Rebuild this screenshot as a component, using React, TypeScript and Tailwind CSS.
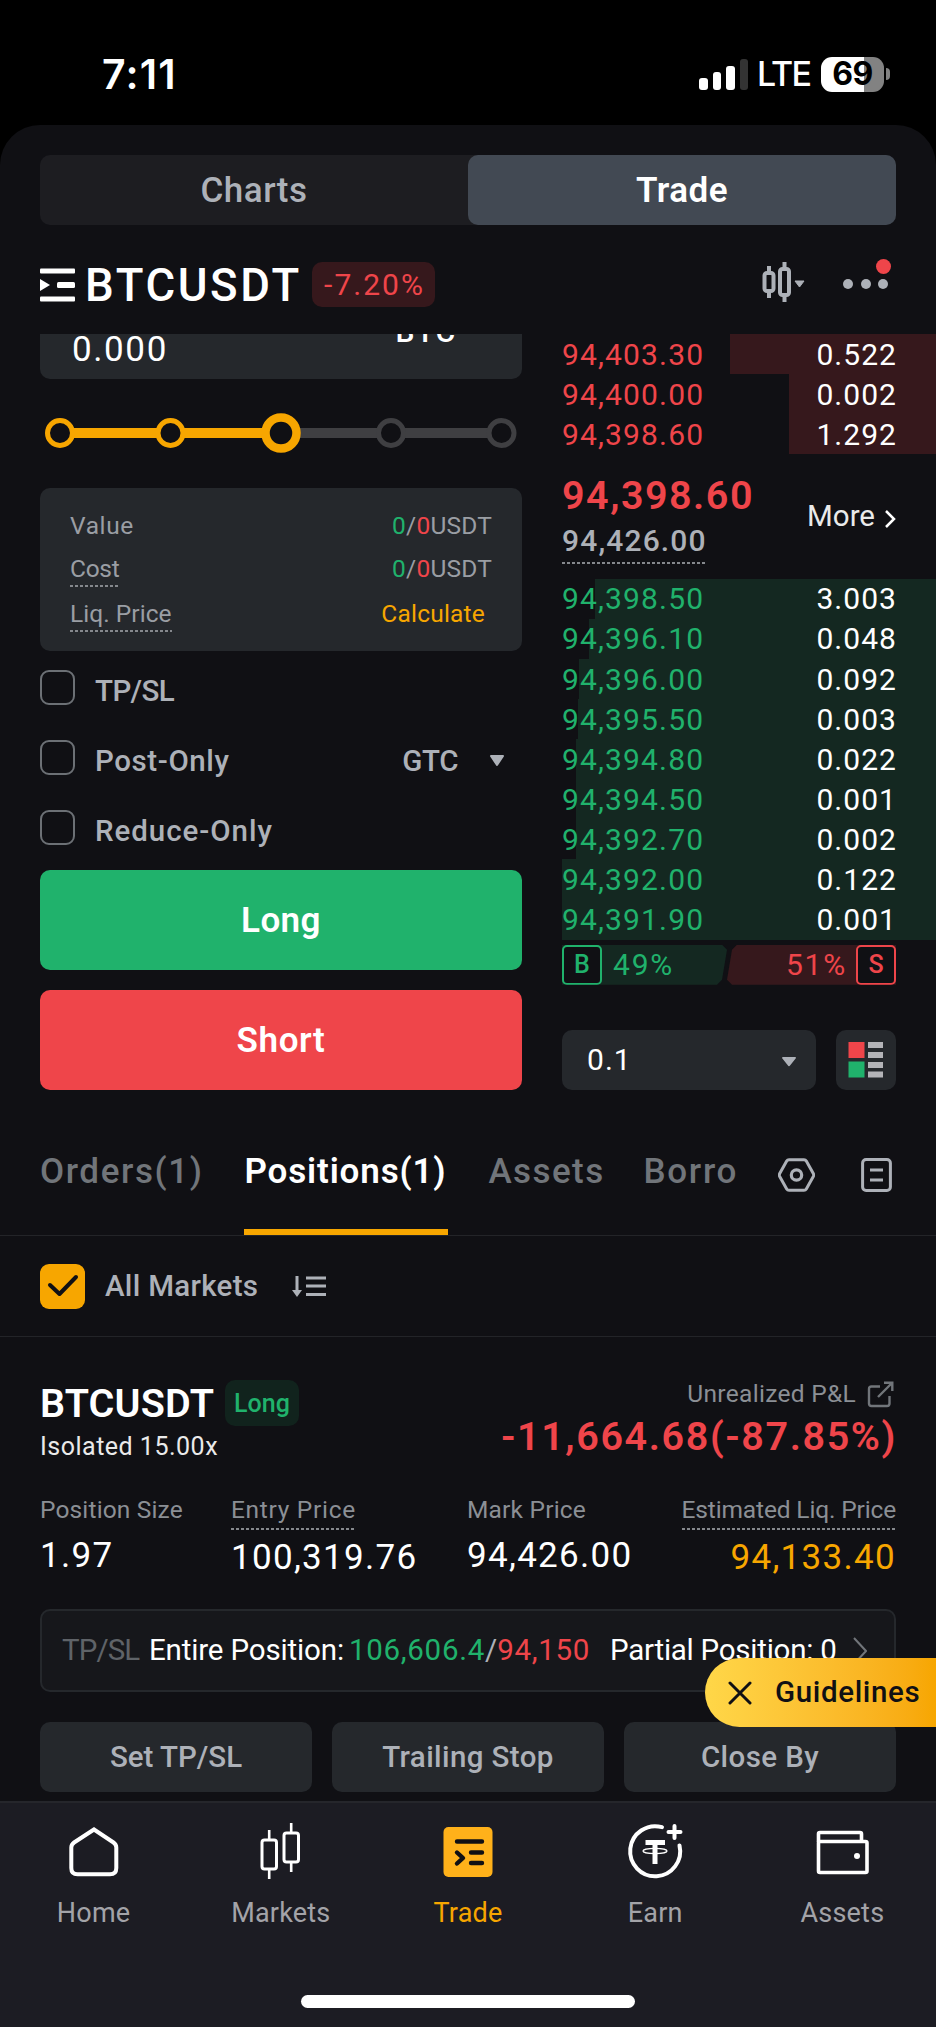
import type { ReactNode } from "react";
import clsx from "clsx";

interface BookRow {
  price: string;
  qty: string;
  depth: number;
}

const ASKS: BookRow[] = [
  { price: "94,403.30", qty: "0.522", depth: 206 },
  { price: "94,400.00", qty: "0.002", depth: 147 },
  { price: "94,398.60", qty: "1.292", depth: 147 },
];

const BIDS: BookRow[] = [
  { price: "94,398.50", qty: "3.003", depth: 341 },
  { price: "94,396.10", qty: "0.048", depth: 347 },
  { price: "94,396.00", qty: "0.092", depth: 357 },
  { price: "94,395.50", qty: "0.003", depth: 358 },
  { price: "94,394.80", qty: "0.022", depth: 360 },
  { price: "94,394.50", qty: "0.001", depth: 360 },
  { price: "94,392.70", qty: "0.002", depth: 360 },
  { price: "94,392.00", qty: "0.122", depth: 374 },
  { price: "94,391.90", qty: "0.001", depth: 374 },
];

function Dashes({ className }: { className?: string }) {
  return (
    <div
      className={clsx(
        "h-[2px] bg-[repeating-linear-gradient(90deg,#85888d_0_3px,transparent_3px_5px)]",
        className
      )}
    />
  );
}

function Caret({ className }: { className?: string }) {
  return (
    <svg viewBox="0 0 16 12" className={className} preserveAspectRatio="none" aria-hidden="true">
      <path d="M2 1h12l-6 9z" fill="#adb1b8" stroke="#adb1b8" strokeWidth="2" strokeLinejoin="round" />
    </svg>
  );
}

function StatusBar() {
  return (
    <div className="flex h-[125px] items-center justify-between bg-black pr-[46px] pl-[102px] pt-[23px]">
      <div className="font-['Inter'] text-[41px] leading-none font-semibold tracking-[1.2px] text-white">7:11</div>
      <div className="flex items-center">
        <div className="flex h-[31px] items-end gap-[5px]">
          <span className="h-[12px] w-[8.5px] rounded-[3px] bg-white" />
          <span className="h-[18px] w-[8.5px] rounded-[3px] bg-white" />
          <span className="h-[24px] w-[8.5px] rounded-[3px] bg-white" />
          <span className="h-[31px] w-[8.5px] rounded-[3px] bg-[#333]" />
        </div>
        <span className="ml-[9px] w-[54px] font-['Inter'] text-[34px] leading-none font-medium tracking-[-1.9px] text-white">
          LTE
        </span>
        <div className="ml-[10px] flex h-[35px] w-[63px] items-center justify-center rounded-[11px] bg-[linear-gradient(90deg,#fff_69%,#828282_69%)] font-['Inter'] text-[32px] leading-none font-bold tracking-[-0.5px] text-black">
          69
        </div>
        <span className="ml-[2px] h-[12px] w-[4px] rounded-r-full bg-[#828282]" />
      </div>
    </div>
  );
}

function PairHeader() {
  return (
    <div className="flex h-[109px] items-center pt-[10px] pr-[36px] pl-[40px]">
      <svg width="35" height="34" viewBox="0 0 35 34" fill="#fff" aria-hidden="true">
        <rect x="0" y="0.5" width="35" height="5" rx="1" />
        <rect x="17" y="14" width="18" height="6" rx="1.5" />
        <rect x="0" y="28.5" width="35" height="5" rx="1" />
        <path d="M0 11l10 6-10 6z" />
      </svg>
      <div className="mt-[2px] ml-[10px] w-[216px] text-[45.500px] leading-none font-medium tracking-[2.600px] text-white">
        BTCUSDT
      </div>
      <div className="ml-[11px] flex h-[45px] w-[123px] items-center justify-center rounded-[10px] bg-[#36181c] pl-[2px] text-[30px] leading-none tracking-[2px] text-[#ef454a]">
        -7.20%
      </div>
      <svg width="43" height="42" viewBox="0 0 43 42" className="mt-[-6px] ml-auto" aria-hidden="true">
        <g fill="none" stroke="#adb1b8" strokeWidth="4">
          <rect x="2.5" y="12" width="9" height="18" rx="2.5" />
          <rect x="18" y="8" width="9" height="26" rx="2.5" />
          <path d="M7 5v7M7 30v7M22.5 1v7M22.5 34v7" />
        </g>
        <path d="M33 20h9l-4.500 6z" fill="#adb1b8" stroke="#adb1b8" strokeLinejoin="round" />
      </svg>
      <div className="relative mt-[-1px] ml-[38px] flex w-[57px] items-center gap-[7.500px]">
        <span className="size-[10px] rounded-full bg-[#adb1b8]" />
        <span className="size-[10px] rounded-full bg-[#adb1b8]" />
        <span className="size-[10px] rounded-full bg-[#adb1b8]" />
        <span className="absolute top-[-20px] left-[32.500px] size-[15px] rounded-full bg-[#ef454a]" />
      </div>
    </div>
  );
}

function AmountSlider() {
  return (
    <svg width="482" height="40" viewBox="0 0 482 40" className="my-[34.500px] block" aria-hidden="true">
      <path d="M20 20H240" stroke="#f7a600" strokeWidth="10" />
      <path d="M240 20H461" stroke="#3f3f42" strokeWidth="10" />
      <g fill="#101014" strokeWidth="5">
        <circle cx="20" cy="20" r="12.500" stroke="#f7a600" />
        <circle cx="130.500" cy="20" r="12.500" stroke="#f7a600" />
        <circle cx="351" cy="20" r="12.500" stroke="#3f3f42" />
        <circle cx="461.500" cy="20" r="12.500" stroke="#3f3f42" />
      </g>
      <circle cx="241" cy="20" r="15.500" fill="#101014" stroke="#f7a600" strokeWidth="8.500" />
    </svg>
  );
}

function ZeroPair() {
  return (
    <span>
      <span className="text-[#20b26c]">0</span>/<span className="text-[#ef454a]">0</span>USDT
    </span>
  );
}

function CheckRow({ label, labelClass, children }: { label: string; labelClass: string; children?: ReactNode }) {
  return (
    <div className="flex h-[70px] items-center">
      <span className="size-[35px] rounded-[9px] border-2 border-[#6c7075]" />
      <span className={clsx("mt-[8px] ml-[20px] text-[29.500px] leading-none font-medium text-[#adb1b8]", labelClass)}>
        {label}
      </span>
      {children}
    </div>
  );
}

function OrderForm() {
  return (
    <div className="w-[482px]">
      <div className="flex h-[44.500px] items-start overflow-hidden rounded-b-[10px] bg-[#25282c] pl-[32px] text-white">
        <span className="mt-[-4px] text-[35px] leading-[40px] tracking-[1.600px]">0.000</span>
        <span className="mt-[-17px] ml-auto mr-[65px] text-[30px] leading-[30px] font-medium tracking-[1.800px]">
          BTC
        </span>
      </div>
      <AmountSlider />
      <div className="h-[163px] rounded-[10px] bg-[#25282c] pt-[22px] pr-[30px] pl-[30px] text-[24.500px] leading-[32px] tracking-[0.2px] text-[#9a9ea4]">
        <div className="flex justify-between">
          <span className="tracking-[0.6px]">Value</span>
          <ZeroPair />
        </div>
        <div className="mt-[11px] flex justify-between">
          <div className="tracking-[-0.3px]">
            Cost
            <Dashes />
          </div>
          <ZeroPair />
        </div>
        <div className="mt-[11px] flex justify-between">
          <div className="tracking-[0.050px]">
            Liq. Price
            <Dashes />
          </div>
          <span className="mr-[7px] text-[#f7a600]">Calculate</span>
        </div>
      </div>
      <div className="mt-[2px] mb-[7px]">
        <CheckRow label="TP/SL" labelClass="tracking-[-0.6px]" />
        <CheckRow label="Post-Only" labelClass="tracking-[0.6px]">
          <span className="mt-[8px] ml-auto text-[29.500px] leading-none font-medium tracking-[-0.4px] text-[#adb1b8]">
            GTC
          </span>
          <Caret className="mt-[7px] mr-[17px] ml-[31px] h-[12px] w-[16px]" />
        </CheckRow>
        <CheckRow label="Reduce-Only" labelClass="tracking-[0.950px]" />
      </div>
      <button className="flex h-[100px] w-full items-center justify-center rounded-[10px] bg-[#20b26c] pt-[4px] text-[35px] font-semibold tracking-[0.4px] text-white">
        Long
      </button>
      <button className="mt-[20px] flex h-[100px] w-full items-center justify-center rounded-[10px] bg-[#ef454a] pt-[4px] text-[35px] font-semibold tracking-[0.6px] text-white">
        Short
      </button>
    </div>
  );
}

function BookRows({ rows, side }: { rows: BookRow[]; side: "ask" | "bid" }) {
  return rows.map((row) => (
    <div key={row.price} className="relative flex h-[40.100px] items-center justify-between pr-[39px]">
      <div
        className={clsx("absolute inset-y-0 right-0", side === "ask" ? "bg-[#36181c]" : "bg-[#142821]")}
        style={{ width: row.depth }}
      />
      <span
        className={clsx(
          "relative pt-px text-[30px] leading-none tracking-[1.150px]",
          side === "ask" ? "text-[#ef454a]" : "text-[#20b26c]"
        )}
      >
        {row.price}
      </span>
      <span className="relative pt-px text-[30px] leading-none tracking-[1.050px] text-white">{row.qty}</span>
    </div>
  ));
}

function OrderBook() {
  return (
    <div className="ml-[40px] w-[374px]">
      <BookRows rows={ASKS} side="ask" />
      <div className="flex h-[124.500px] items-center justify-between pr-[40px]">
        <div className="pt-[4px]">
          <div className="text-[39.500px] leading-[46px] font-semibold tracking-[1.500px] text-[#ef454a]">94,398.60</div>
          <div className="w-[143px] text-[30px] leading-[43px] font-medium tracking-[1.150px] text-[#adb1b8]">
            94,426.00
            <Dashes />
          </div>
        </div>
        <div className="flex items-center pt-px text-[29.500px] leading-none text-[#eaeaea]">
          More
          <svg width="12" height="20" viewBox="0 0 12 20" fill="none" className="mt-[3px] ml-[9px]" aria-hidden="true">
            <path d="M2 2l8 8-8 8" stroke="#fff" strokeWidth="2.500" />
          </svg>
        </div>
      </div>
      <BookRows rows={BIDS} side="bid" />
      <div className="mt-[5px] flex h-[40px] w-[334px] justify-between text-[30px] leading-none">
        <div className="flex w-[165px] items-center bg-[#142821] text-[#20b26c] [clip-path:polygon(0_0,160px_0,165px_5px,160px_35px,155px_100%,0_100%)]">
          <span className="flex size-[40px] items-center justify-center rounded-[5px] border-2 border-[#20b26c] bg-[#101014] text-[25px] font-medium">
            B
          </span>
          <span className="mt-px ml-[11px] tracking-[1.800px]">49%</span>
        </div>
        <div className="flex w-[169px] items-center justify-end bg-[#36181c] text-[#ef454a] [clip-path:polygon(10px_0,100%_0,100%_100%,5px_100%,0_35px,5px_5px)]">
          <span className="mt-px mr-[9px] tracking-[1.800px]">51%</span>
          <span className="flex size-[40px] items-center justify-center rounded-[5px] border-2 border-[#ef454a] bg-[#101014] text-[25px] font-medium">
            S
          </span>
        </div>
      </div>
      <div className="mt-[45px] flex gap-[20px]">
        <div className="flex h-[60px] w-[254px] items-center justify-between rounded-[10px] bg-[#25282c] pr-[19px] pl-[25px] text-[30px] tracking-[1.050px] text-white">
          0.1
          <Caret className="mt-[5px] h-[10px] w-[16px]" />
        </div>
        <div className="flex size-[60px] items-center justify-center rounded-[10px] bg-[#25282c]">
          <svg width="36" height="36" viewBox="0 0 36 36" aria-hidden="true">
            <rect x="0.500" y="0" width="16" height="16" fill="#ef454a" />
            <rect x="0.500" y="19.500" width="16" height="16" fill="#20b26c" />
            <path d="M20 3h15M20 13h15M20 23h15M20 32.500h15" stroke="#b4b4b8" strokeWidth="6" />
          </svg>
        </div>
      </div>
    </div>
  );
}

function Tabs() {
  return (
    <div className="flex h-[146px] border-b border-[#232428] pl-[40px] text-[35px] leading-[50px] font-medium text-[#71757a]">
      <span className="mt-[57px] w-[203.500px] tracking-[1.600px]">Orders(1)</span>
      <div className="flex w-[204px] flex-col justify-between border-b-[6px] border-[#f7a600] pt-[57px] pl-[1px] font-semibold tracking-[0.850px] text-white">
        Positions(1)
      </div>
      <span className="mt-[57px] ml-[41px] w-[155px] tracking-[1.400px]">Assets</span>
      <span className="mt-[57px] w-[96px] tracking-[1.700px]">Borro</span>
      <svg width="37" height="34" viewBox="0 0 37 34" className="mt-[68px] ml-[38px]" fill="none" aria-hidden="true">
        <path
          d="M11 1.700h15q1.500 0 2.300 1.400l7 12.400q.8 1.500 0 3l-7 12.400q-.8 1.400-2.300 1.400h-15q-1.500 0-2.300-1.400l-7-12.400q-.8-1.500 0-3l7-12.400q.8-1.400 2.300-1.400z"
          stroke="#adb1b8"
          strokeWidth="3"
        />
        <circle cx="18.500" cy="17" r="5.200" stroke="#adb1b8" strokeWidth="3.200" />
      </svg>
      <svg width="31" height="34" viewBox="0 0 31 34" className="mt-[68px] ml-[46px]" fill="none" aria-hidden="true">
        <rect x="1.600" y="1.600" width="27.800" height="30.800" rx="3.500" stroke="#adb1b8" strokeWidth="3" />
        <path d="M9 12h13M9 22h13" stroke="#adb1b8" strokeWidth="3.200" />
      </svg>
    </div>
  );
}

function MarketFilter() {
  return (
    <div className="flex h-[101px] items-center border-b border-[#232428] pl-[40px]">
      <span className="flex size-[45px] items-center justify-center rounded-[9px] bg-[#f7a600]">
        <svg width="32" height="24" viewBox="0 0 32 24" fill="none" aria-hidden="true">
          <path d="M3 11l9.500 9L29 3" stroke="#101014" strokeWidth="4" strokeLinecap="round" strokeLinejoin="round" />
        </svg>
      </span>
      <span className="mt-px ml-[20px] w-[187px] text-[29.500px] leading-none font-medium tracking-[0.3px] text-[#adb1b8]">
        All Markets
      </span>
      <svg width="34" height="22" viewBox="0 0 34 22" aria-hidden="true">
        <path d="M5 1v17M14 3h20M14 11h20M14 19.500h20" stroke="#adb1b8" strokeWidth="3" fill="none" />
        <path d="M0 15h10l-5 7z" fill="#adb1b8" />
      </svg>
    </div>
  );
}

interface StatProps {
  label: string;
  value: string;
  dashed?: boolean;
  className?: string;
  labelClass: string;
}

function Stat({ label, value, dashed, className, labelClass }: StatProps) {
  return (
    <div className={clsx("flex flex-col items-start", className)}>
      <div className={clsx("text-[24.500px] leading-[37px] text-[#8b8f95]", labelClass)}>
        {label}
        {dashed && <Dashes />}
      </div>
      <div className="mt-[6px] text-[35px] leading-[44px] tracking-[1.300px]">{value}</div>
    </div>
  );
}

function PositionCard() {
  return (
    <div className="px-[40px] pt-[43px]">
      <div className="flex h-[84px] justify-between">
        <div>
          <div className="flex h-[46px] items-center">
            <span className="mt-[2px] w-[174px] text-[39.500px] leading-none font-semibold tracking-[0.150px] text-white">
              BTCUSDT
            </span>
            <span className="ml-[11px] flex h-[46px] w-[74px] items-center justify-center rounded-[10px] bg-[#11231d] pt-[2px] text-[25px] font-medium text-[#20b26c]">
              Long
            </span>
          </div>
          <div className="mt-[3px] text-[25px] leading-[36px] tracking-[0.5px] text-[#eaeaea]">Isolated 15.00x</div>
        </div>
        <div className="flex flex-col items-end">
          <div className="flex h-[28px] items-center pr-[2px] text-[24.500px] tracking-[0.3px] text-[#8b8f95]">
            Unrealized P&amp;L
            <svg width="27" height="27" viewBox="0 0 27 27" fill="none" className="mt-px ml-[11px]" aria-hidden="true">
              <path
                d="M13 5.500H4.500q-2.500 0-2.500 2.500v14.500q0 2.500 2.500 2.500h15.500q2.500 0 2.500-2.500V15M11 16L25 2M17 1.800h8.300v8.200"
                stroke="#71757a"
                strokeWidth="2.400"
              />
            </svg>
          </div>
          <div className="mt-[3px] mr-[-1px] text-[39.500px] leading-[52px] font-semibold tracking-[1.600px] text-[#ef454a]">
            -11,664.68(-87.85%)
          </div>
        </div>
      </div>
      <div className="mt-[27px] grid h-[118px] grid-cols-[191px_236px_1fr_auto] text-white">
        <Stat label="Position Size" value="1.97" labelClass="tracking-[0.150px]" />
        <Stat label="Entry Price" value="100,319.76" labelClass="tracking-[0.7px]" dashed />
        <Stat label="Mark Price" value="94,426.00" labelClass="tracking-[0.2px]" />
        <Stat
          label="Estimated Liq. Price"
          value="94,133.40"
          labelClass="tracking-[-0.150px]"
          className="items-end! text-[#f7a600]"
          dashed
        />
      </div>
      <div className="flex h-[83px] items-center rounded-[10px] border-2 border-[#25282c] bg-[#16171b] pt-px pl-[20px] text-[29.500px] leading-none whitespace-pre text-white">
        <span className="w-[87px] tracking-[-0.9px] text-[#5f6368]">TP/SL</span>
        <span className="w-[200px] tracking-[-0.150px]">Entire Position:</span>
        <span className="tracking-[0.7px] text-[#20b26c]">106,606.4</span>
        <span className="text-[#adb1b8]">/</span>
        <span className="tracking-[0.7px] text-[#ef454a]">94,150</span>
        <span className="ml-[20px] tracking-[-0.250px]">Partial Position: 0</span>
        <svg width="14" height="28" viewBox="0 0 14 28" fill="none" className="mr-[27px] ml-auto" aria-hidden="true">
          <path d="M1 1l12 13L1 27" stroke="#71757a" strokeWidth="2" />
        </svg>
      </div>
      <div className="mt-[30px] grid grid-cols-3 gap-[20px] text-[29.500px] font-medium text-[#adb1b8]">
        <button className="h-[70px] rounded-[10px] bg-[#25282c]">Set TP/SL</button>
        <button className="h-[70px] rounded-[10px] bg-[#25282c] tracking-[0.4px]">Trailing Stop</button>
        <button className="h-[70px] rounded-[10px] bg-[#25282c] tracking-[0.4px]">Close By</button>
      </div>
    </div>
  );
}

const NAV: { label: string; icon: ReactNode }[] = [
  {
    label: "Home",
    icon: (
      <path
        d="M30 9.500L49.500 22.500q2.800 2 2.800 5V48q0 6.300-6.300 6.300H13.500Q7.300 54.300 7.300 48V27.500q0-3 2.800-5z"
        strokeWidth="4"
      />
    ),
  },
  {
    label: "Markets",
    icon: (
      <>
        <rect x="11" y="20" width="14.500" height="29" rx="2.500" strokeWidth="3" />
        <rect x="33" y="13" width="14.500" height="29" rx="2.500" strokeWidth="3" />
        <path d="M18.200 10v10M18.200 49v10M40.200 3v10M40.200 42v10" strokeWidth="2.600" />
      </>
    ),
  },
  {
    label: "Trade",
    icon: (
      <>
        <rect x="5.500" y="7" width="49" height="50" rx="5" fill="#ffb11a" stroke="none" />
        <path
          d="M19 21.500h25M33 32.500h11M33 43h11M19 32.500l6 5.500-6 5.500"
          stroke="#101014"
          strokeWidth="4.400"
          strokeLinecap="round"
          strokeLinejoin="round"
        />
      </>
    ),
  },
  {
    label: "Earn",
    icon: (
      <>
        <path d="M37 7.200A25 25 0 1 0 54.500 25.500" strokeWidth="4" strokeLinecap="round" />
        <path d="M49.500 6v12M43.500 12h12" strokeWidth="4" strokeLinecap="round" />
        <path d="M20.500 22.500h19.500M30 22.500v21.500" strokeWidth="5" />
        <ellipse cx="30" cy="31" rx="12" ry="2.600" strokeWidth="1.300" />
      </>
    ),
  },
  {
    label: "Assets",
    icon: (
      <>
        <path d="M6.500 22V14q0-1.500 1.500-1.500h40q1.500 0 1.500 1.500v8" strokeWidth="3.600" />
        <rect x="6.500" y="21.500" width="48.500" height="31" rx="1.500" strokeWidth="3.600" />
        <circle cx="45" cy="36" r="3" fill="#fff" stroke="none" />
      </>
    ),
  },
];

function BottomNav() {
  return (
    <nav className="mt-auto flex h-[226px] flex-col items-center border-t-2 border-[#25262b] bg-[#1c1c23]">
      <div className="flex w-full">
        {NAV.map((item) => (
          <div key={item.label} className="flex flex-1 flex-col items-center pt-[17px]">
            <svg width="60" height="64" viewBox="0 0 60 64" fill="none" stroke="#fff" aria-hidden="true">
              {item.icon}
            </svg>
            <span
              className={clsx(
                "mt-[10px] text-[27px] leading-[38px] tracking-[0.2px]",
                item.label === "Trade" ? "text-[#f7a600]" : "text-[#a3a3a8]"
              )}
            >
              {item.label}
            </span>
          </div>
        ))}
      </div>
      <div className="mt-[63px] h-[13px] w-[334px] rounded-full bg-white" />
    </nav>
  );
}

export default function App() {
  return (
    <div className="relative flex h-[2027px] w-[936px] flex-col overflow-hidden bg-black font-['Roboto',sans-serif]">
      <StatusBar />
      <div className="flex flex-1 flex-col rounded-t-[40px] bg-[#101014]">
        <div className="mx-[40px] mt-[30px] flex h-[70px] rounded-[10px] bg-[#1d1d21] text-[35px] tracking-[0.5px]">
          <button className="flex-1 rounded-[10px] pt-[2px] font-medium text-[#adb1b8]">Charts</button>
          <button className="flex-1 rounded-[10px] bg-[#424953] pt-[2px] font-semibold text-white">Trade</button>
        </div>
        <PairHeader />
        <div className="flex h-[756px] pl-[40px]">
          <OrderForm />
          <OrderBook />
        </div>
        <Tabs />
        <MarketFilter />
        <PositionCard />
        <BottomNav />
      </div>

      {/* floating guide button */}
      <div className="absolute top-[1658px] right-0 flex h-[69px] w-[231px] items-center rounded-l-full bg-linear-to-r from-[#ffd748] to-[#f7a600] pl-[23px] text-[29.500px] font-medium tracking-[0.650px] text-[#101014]">
        <svg width="24" height="24" viewBox="0 0 24 24" className="mt-px" aria-hidden="true">
          <path d="M2 2l20 20M22 2L2 22" stroke="#101014" strokeWidth="3" strokeLinecap="round" />
        </svg>
        <span className="ml-[23px]">Guidelines</span>
      </div>
    </div>
  );
}
